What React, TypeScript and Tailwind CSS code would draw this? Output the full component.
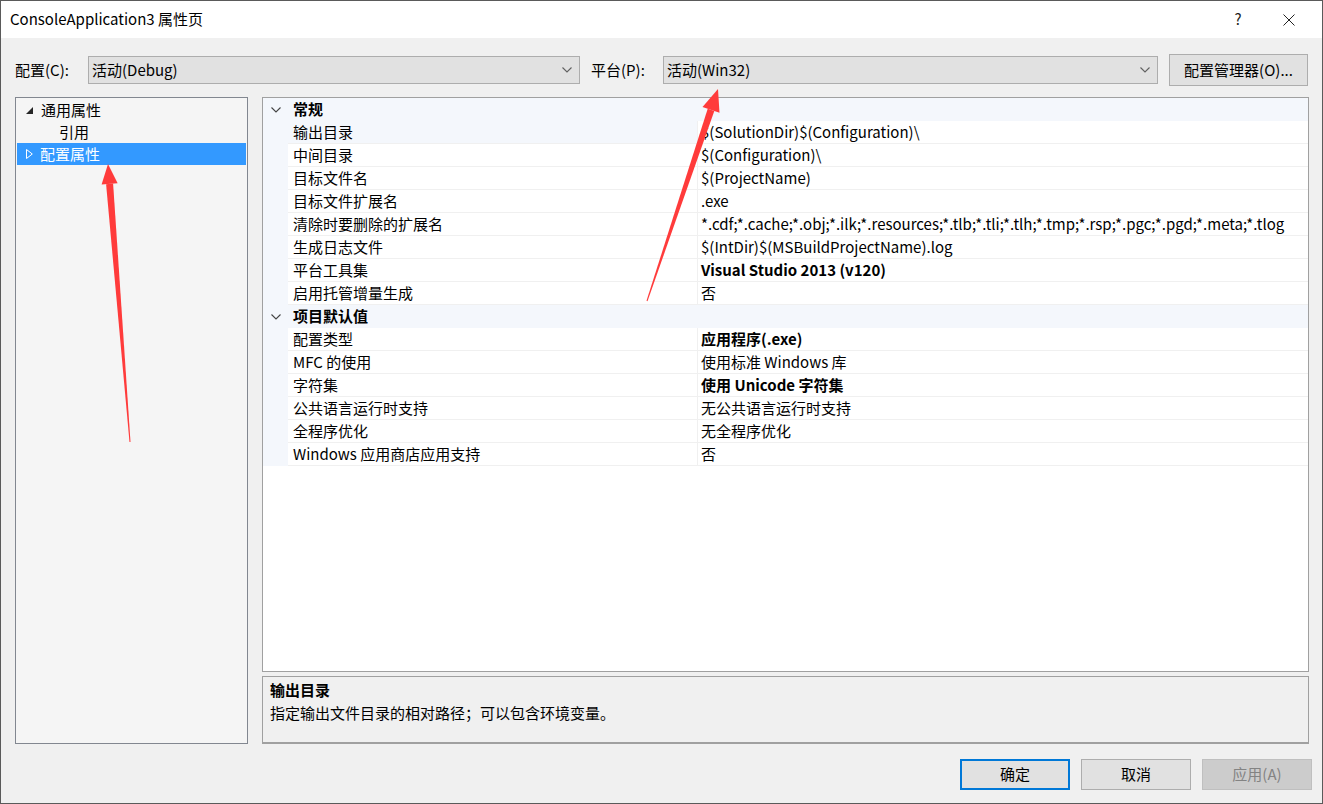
import React from 'react';

type Row = { name: string; value: string; bold?: boolean; selected?: boolean };
type Section = { title: string; rows: Row[] };

const sections: Section[] = [
  {
    title: '常规',
    rows: [
      { name: '输出目录', value: '$(SolutionDir)$(Configuration)\\', selected: true },
      { name: '中间目录', value: '$(Configuration)\\' },
      { name: '目标文件名', value: '$(ProjectName)' },
      { name: '目标文件扩展名', value: '.exe' },
      {
        name: '清除时要删除的扩展名',
        value: '*.cdf;*.cache;*.obj;*.ilk;*.resources;*.tlb;*.tli;*.tlh;*.tmp;*.rsp;*.pgc;*.pgd;*.meta;*.tlog',
      },
      { name: '生成日志文件', value: '$(IntDir)$(MSBuildProjectName).log' },
      { name: '平台工具集', value: 'Visual Studio 2013 (v120)', bold: true },
      { name: '启用托管增量生成', value: '否' },
    ],
  },
  {
    title: '项目默认值',
    rows: [
      { name: '配置类型', value: '应用程序(.exe)', bold: true },
      { name: 'MFC 的使用', value: '使用标准 Windows 库' },
      { name: '字符集', value: '使用 Unicode 字符集', bold: true },
      { name: '公共语言运行时支持', value: '无公共语言运行时支持' },
      { name: '全程序优化', value: '无全程序优化' },
      { name: 'Windows 应用商店应用支持', value: '否' },
    ],
  },
];

const Chevron = ({ className }: { className?: string }) => (
  <svg width="10" height="6" viewBox="0 0 10 6" className={className}>
    <polyline points="0.5,0.5 5,5 9.5,0.5" fill="none" stroke="currentColor" strokeWidth="1.1" />
  </svg>
);

const Combo = ({ text, width }: { text: string; width: string }) => (
  <div className={`${width} h-[28px] flex items-center justify-between bg-[#e1e1e1] border border-[#adadad] pl-[3px] pr-[7px]`}>
    <span>{text}</span>
    <Chevron className="text-[#606060]" />
  </div>
);

const Button = ({ label, primary, disabled }: { label: string; primary?: boolean; disabled?: boolean }) => (
  <div
    className={`w-[110px] h-[31px] flex items-center justify-center ${
      disabled
        ? 'bg-[#cccccc] border border-[#bfbfbf] text-[#838383]'
        : primary
        ? 'bg-[#e1e1e1] border-2 border-[#0078d7]'
        : 'bg-[#e1e1e1] border border-[#adadad]'
    }`}
  >
    {label}
  </div>
);

export default function App() {
  return (
    <div
      className="relative w-[1323px] h-[804px] flex flex-col border border-[#5a5a5a] bg-[#f0f0f0] text-[15px] text-black overflow-hidden"
      style={{ fontFamily: '"Noto Sans CJK SC", "Noto Sans", sans-serif' }}
    >
      {/* title bar */}
      <div className="h-[37px] bg-white flex items-center justify-between pl-[9px] shrink-0">
        <span>ConsoleApplication3 属性页</span>
        <div className="flex items-center h-full">
          <div className="w-[46px] flex justify-center text-[15px] text-[#222]">?</div>
          <div className="w-[56px] mr-[5px] flex justify-center">
            <svg width="12" height="12" viewBox="0 0 12 12">
              <path d="M0.5 0.5 L11.5 11.5 M11.5 0.5 L0.5 11.5" stroke="#222" strokeWidth="1" />
            </svg>
          </div>
        </div>
      </div>

      <div className="flex-1 flex flex-col pl-[14px] pr-[13px] pt-[16px]">
        {/* config row */}
        <div className="flex items-center h-[32px]">
          <span className="w-[73px]">配置(C):</span>
          <Combo text="活动(Debug)" width="w-[492px]" />
          <span className="ml-[11px] w-[72px]">平台(P):</span>
          <Combo text="活动(Win32)" width="w-[495px]" />
          <div className="ml-[11px] w-[139px] h-[32px] flex items-center justify-center bg-[#e1e1e1] border border-[#adadad]">
            配置管理器(O)...
          </div>
        </div>

        {/* main area */}
        <div className="flex mt-[11px] h-[647px] gap-[14px]">
          {/* tree */}
          <div className="w-[233px] bg-[#f5f5f5] border border-[#828790] p-[1px]">
            <div className="h-[22px] flex items-center">
              <svg width="7" height="7" viewBox="0 0 7 7" className="ml-[9px]">
                <polygon points="7,0 7,7 0,7" fill="#262626" />
              </svg>
              <span className="ml-[8px]">通用属性</span>
            </div>
            <div className="h-[22px] flex items-center pl-[42px]">引用</div>
            <div className="h-[22px] flex items-center bg-[#3399ff] text-white">
              <svg width="7" height="10" viewBox="0 0 7 10" className="ml-[9px]">
                <polygon points="0.5,0.5 6.3,5 0.5,9.5" fill="none" stroke="white" strokeWidth="1" />
              </svg>
              <span className="ml-[7px]">配置属性</span>
            </div>
          </div>

          {/* grid + description */}
          <div className="w-[1047px] flex flex-col gap-[4px]">
            <div className="h-[575px] bg-white border border-[#a0a0a0] overflow-hidden">
              {sections.map(s => (
                <div key={s.title}>
                  <div className="h-[23px] flex items-center bg-[#f4f7fc]">
                    <Chevron className="ml-[8px] mr-[12px] text-[#444]" />
                    <span className="font-bold">{s.title}</span>
                  </div>
                  {s.rows.map(r => (
                    <div key={r.name} className="h-[23px] flex bg-[#f4f7fc]">
                      <div
                        className={`w-[410px] ml-[25px] shrink-0 flex items-center pl-[5px] pt-[1px] border-b border-r border-[#f0f0f0] ${
                          r.selected ? 'bg-[#f4f7fc]' : 'bg-white'
                        }`}
                      >
                        {r.name}
                      </div>
                      <div
                        className={`flex-1 min-w-0 flex items-center pl-[3px] pt-[1px] bg-white border-b border-[#f0f0f0] whitespace-nowrap overflow-hidden ${
                          r.bold ? 'font-bold' : ''
                        }`}
                      >
                        {r.value}
                      </div>
                    </div>
                  ))}
                </div>
              ))}
            </div>
            <div className="h-[68px] bg-[#f0f0f0] border border-[#a0a0a0] border-b-2 px-[7px] pt-[1px]">
              <div className="font-bold leading-[23px]">输出目录</div>
              <div className="leading-[23px]">指定输出文件目录的相对路径；可以包含环境变量。</div>
            </div>
          </div>
        </div>

        {/* buttons */}
        <div className="flex justify-end gap-[11px] mt-[15px] mr-[-3px]">
          <Button label="确定" primary />
          <Button label="取消" />
          <Button label="应用(A)" disabled />
        </div>
      </div>

      {/* red annotation arrows */}
      <svg className="absolute inset-0 pointer-events-none" width="1323" height="804">
        <polygon points="112.1,182.6 105.1,183.2 128.5,441.1 129.5,441" fill="#ff3b3b" />
        <polygon points="107,163 116.6,182.3 100.6,183.5" fill="#ff3b3b" />
        <polygon points="713.3,110 706.7,107.8 645.5,299.8 646.5,300.2" fill="#ff3b3b" />
        <polygon points="717,88 718.5,111.7 701.5,106" fill="#ff3b3b" />
      </svg>
    </div>
  );
}
